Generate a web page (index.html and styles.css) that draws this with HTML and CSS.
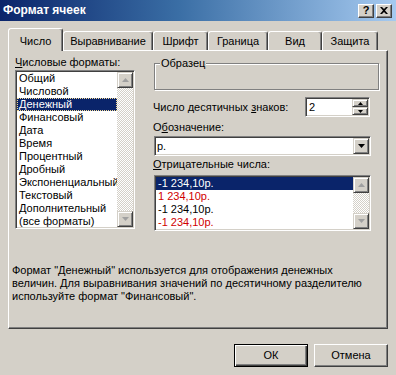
FILE: index.html
```html
<!DOCTYPE html>
<html lang="ru">
<head>
<meta charset="utf-8">
<title>Формат ячеек</title>
<link rel="stylesheet" href="styles.css">
</head>
<body>
<div class="dialog">
  <div class="titlebar">
    <span class="title">Формат ячеек</span>
    <span class="cap-btn help">?</span>
    <span class="cap-btn close"><svg width="8" height="7" viewBox="0 0 8 7"><path d="M0 0h2l2 2 2-2h2L5 3.5 8 7H6L4 5 2 7H0l3-3.5z" fill="#000"/></svg></span>
  </div>

  <div class="tabs">
    <div class="tab active w55">Число</div>
    <div class="tab w90">Выравнивание</div>
    <div class="tab w55">Шрифт</div>
    <div class="tab w60">Граница</div>
    <div class="tab w54">Вид</div>
    <div class="tab w56">Защита</div>
  </div>

  <div class="panel">
    <div class="cols">
      <div class="left">
        <div class="label"><u>Ч</u>исловые форматы:</div>
        <div class="listbox tall">
          <ul class="items">
            <li>Общий</li>
            <li>Числовой</li>
            <li class="sel">Денежный</li>
            <li>Финансовый</li>
            <li>Дата</li>
            <li>Время</li>
            <li>Процентный</li>
            <li>Дробный</li>
            <li>Экспоненциальный</li>
            <li>Текстовый</li>
            <li>Дополнительный</li>
            <li>(все форматы)</li>
          </ul>
          <div class="vscroll">
            <span class="sbtn"><svg width="7" height="4" viewBox="0 0 7 4"><path d="M3.5 0L7 4H0z" fill="#a0a0a0"/></svg></span>
            <span class="track"></span>
            <span class="sbtn"><svg width="7" height="4" viewBox="0 0 7 4"><path d="M0 0h7L3.5 4z" fill="#a0a0a0"/></svg></span>
          </div>
        </div>
      </div>

      <div class="right">
        <div class="group">
          <span class="legend">Образец</span>
        </div>

        <div class="spin-row">
          <span>Число десятичных <u>з</u>наков:</span>
          <div class="spinner">
            <span class="value">2</span>
            <div class="spin-btns">
              <span class="spin"><svg width="5" height="3" viewBox="0 0 5 3"><path d="M2.5 0L5 3H0z" fill="#000"/></svg></span>
              <span class="spin"><svg width="5" height="3" viewBox="0 0 5 3"><path d="M0 0h5L2.5 3z" fill="#000"/></svg></span>
            </div>
          </div>
        </div>

        <div class="label gap4">О<u>б</u>означение:</div>
        <div class="combo">
          <span class="value">р.</span>
          <span class="drop"><svg width="7" height="4" viewBox="0 0 7 4"><path d="M0 0h7L3.5 4z" fill="#000"/></svg></span>
        </div>

        <div class="label gap2"><u>О</u>трицательные числа:</div>
        <div class="listbox short">
          <ul class="items neg">
            <li class="sel">-1 234,10р.</li>
            <li class="red">1 234,10р.</li>
            <li>-1 234,10р.</li>
            <li class="red">-1 234,10р.</li>
          </ul>
          <div class="vscroll">
            <span class="sbtn"><svg width="7" height="4" viewBox="0 0 7 4"><path d="M3.5 0L7 4H0z" fill="#a0a0a0"/></svg></span>
            <span class="track"></span>
            <span class="sbtn"><svg width="7" height="4" viewBox="0 0 7 4"><path d="M0 0h7L3.5 4z" fill="#a0a0a0"/></svg></span>
          </div>
        </div>
      </div>
    </div>

    <p class="desc"><span>Формат "Денежный" используется для отображения денежных</span><span>величин. Для выравнивания значений по десятичному разделителю</span><span>используйте формат "Финансовый".</span></p>
  </div>

  <div class="buttons">
    <button class="btn default">ОК</button>
    <button class="btn">Отмена</button>
  </div>
</div>
</body>
</html>
```

FILE: styles.css
```css
* { box-sizing: border-box; }

html, body {
  margin: 0;
  padding: 0;
  background: #d4d0c8;
}

body {
  font-family: "Liberation Sans", Arial, sans-serif;
  font-size: 11px;
  line-height: 13px;
  color: #000;
}

.dialog {
  width: 396px;
  height: 375px;
  background: #d4d0c8;
  overflow: hidden;
}

/* title bar */
.titlebar {
  height: 21px;
  display: flex;
  align-items: center;
  gap: 2px;
  padding: 0 4px 0 3px;
  background: linear-gradient(to right, #0a246a 0%, #3a6ea5 45%, #a6caf0 100%);
}

.title {
  flex: 1;
  color: #fff;
  font-weight: bold;
  font-size: 12px;
}

.cap-btn {
  width: 16px;
  height: 14px;
  display: flex;
  align-items: center;
  justify-content: center;
  background: #d4d0c8;
  border: 1px solid;
  border-color: #fff #404040 #404040 #fff;
  box-shadow: inset -1px -1px #808080;
  font-weight: bold;
  font-size: 11px;
  line-height: 11px;
}

/* tabs */
.tabs {
  display: flex;
  align-items: flex-end;
  height: 22px;
  margin: 7px 0 0 8px;
}

.tab {
  height: 19px;
  display: flex;
  align-items: center;
  justify-content: center;
  padding-top: 1px;
  border: 1px solid;
  border-bottom: none;
  border-color: #fff #404040 transparent #fff;
  border-radius: 3px 3px 0 0;
  box-shadow: inset -1px 0 #808080;
  background: #d4d0c8;
  white-space: nowrap;
}

.tab.active {
  height: 23px;
  margin-bottom: -1px;
  padding-top: 3px;
  position: relative;
  z-index: 1;
}

.w54 { width: 54px; }
.w55 { width: 55px; }
.w56 { width: 56px; }
.w60 { width: 60px; }
.w90 { width: 90px; }

/* panel */
.panel {
  margin-left: 8px;
  width: 380px;
  height: 279px;
  padding-top: 5px;
  border: 1px solid;
  border-color: #fff #404040 #404040 #fff;
  box-shadow: inset -1px -1px #808080;
}

.cols {
  display: grid;
  grid-template-columns: 120px 226px;
  column-gap: 18px;
  margin-left: 6px;
}

.label {
  height: 13px;
  white-space: nowrap;
}

.left .label { margin-bottom: 1px; }

.gap4 { margin-top: 4px; }
.gap2 { margin-top: 2px; }

/* sunken field */
.listbox, .spinner, .combo {
  background: #fff;
  border: 1px solid;
  border-color: #808080 #fff #fff #808080;
  box-shadow: inset 1px 1px #404040, inset -1px -1px #d4d0c8;
  padding: 1px;
}

.listbox {
  display: flex;
  overflow: hidden;
}

.listbox.tall {
  width: 120px;
  height: 159px;
}

.listbox.short {
  margin: 4px 0 0 1px;
  width: 217px;
  height: 56px;
}

.items {
  list-style: none;
  margin: 0;
  padding: 0;
  flex: 1;
  min-width: 0;
}

.items li {
  height: 13px;
  padding-left: 2px;
  white-space: nowrap;
}

.items li.sel {
  background: #0a246a;
  color: #fff;
}

.tall .items li.sel {
  outline: 1px dotted #f5db95;
  outline-offset: -1px;
}

.items li.red { color: #d00000; }

.vscroll {
  width: 16px;
  display: flex;
  flex-direction: column;
}

.sbtn {
  height: 16px;
  flex: none;
  display: flex;
  align-items: center;
  justify-content: center;
  background: #d4d0c8;
  border: 1px solid;
  border-color: #d4d0c8 #404040 #404040 #d4d0c8;
  box-shadow: inset 1px 1px #fff, inset -1px -1px #808080;
}

.track {
  flex: 1;
  background: repeating-conic-gradient(#ffffff 0 25%, #d4d0c8 0 50%) 0 0 / 2px 2px;
}

/* group box */
.group {
  margin: 7px 0 0 1px;
  width: 225px;
  height: 27px;
  border: 1px solid #808080;
  box-shadow: 1px 1px #fff, inset 1px 1px #fff;
}

.legend {
  display: block;
  width: fit-content;
  margin: -7px 0 0 5px;
  padding: 0 1px;
  background: #d4d0c8;
  height: 13px;
}

/* spinner */
.spin-row {
  display: flex;
  align-items: center;
  margin-top: 7px;
  height: 20px;
  white-space: nowrap;
}

.spinner {
  margin: 0 9px 0 auto;
  width: 65px;
  height: 20px;
  display: flex;
  align-items: stretch;
}

.value {
  flex: 1;
  padding-left: 2px;
  display: flex;
  align-items: center;
}

.spin-btns {
  width: 16px;
  display: flex;
  flex-direction: column;
}

.spin {
  flex: 1;
  display: flex;
  align-items: center;
  justify-content: center;
  background: #d4d0c8;
  border: 1px solid;
  border-color: #d4d0c8 #404040 #404040 #d4d0c8;
  box-shadow: inset 1px 1px #fff, inset -1px -1px #808080;
}

/* combo */
.combo {
  margin: 2px 0 0 1px;
  width: 217px;
  height: 20px;
  display: flex;
}

.combo .value { padding-left: 1px; }

.drop {
  width: 16px;
  display: flex;
  align-items: center;
  justify-content: center;
  background: #d4d0c8;
  border: 1px solid;
  border-color: #d4d0c8 #404040 #404040 #d4d0c8;
  box-shadow: inset 1px 1px #fff, inset -1px -1px #808080;
}

/* description */
.desc {
  margin: 33px 0 0 3px;
  line-height: 13px;
}

.desc span {
  display: block;
  white-space: nowrap;
}

/* buttons */
.buttons {
  display: flex;
  justify-content: flex-end;
  gap: 6px;
  margin-top: 15px;
  padding-right: 8px;
}

.btn {
  width: 74px;
  height: 23px;
  padding: 0;
  font: inherit;
  color: #000;
  background: #d4d0c8;
  border: 1px solid;
  border-color: #fff #404040 #404040 #fff;
  box-shadow: inset -1px -1px #808080;
  border-radius: 0;
}

.btn.default {
  border: 1px solid #000;
  box-shadow: inset 1px 1px #fff, inset -1px -1px #404040, inset -2px -2px #808080;
}
```
